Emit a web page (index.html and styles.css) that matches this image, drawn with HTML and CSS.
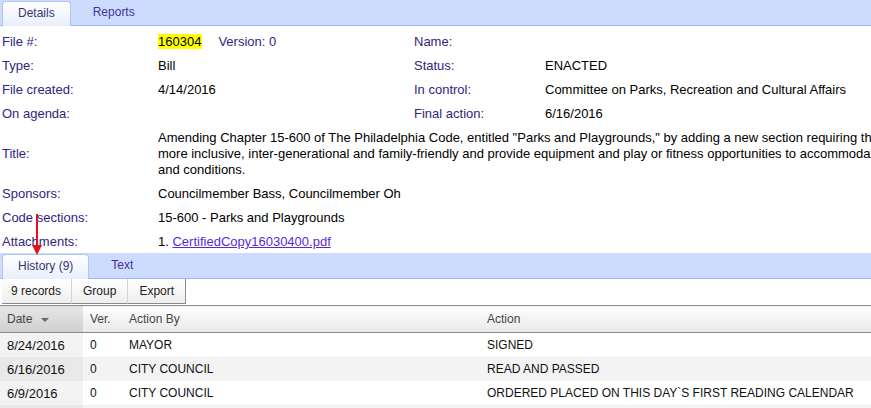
FILE: index.html
```html
<!DOCTYPE html>
<html><head>
<meta charset="utf-8">
<title>File 160304 - Details</title>
<link rel="stylesheet" href="styles.css">
</head>
<body>
<div class="page">

<div class="tabbar">
  <span class="tab active">Details</span>
  <span class="tab">Reports</span>
</div>

<table class="details" cellspacing="0" cellpadding="0">
<colgroup><col class="w-lbl"><col class="w-val"><col class="w-lbl2"><col></colgroup>
<tr>
  <td class="lbl">File #:</td>
  <td><span class="hl">160304</span><span class="ver">Version: 0</span></td>
  <td class="lbl">Name:</td>
  <td></td>
</tr>
<tr>
  <td class="lbl">Type:</td>
  <td>Bill</td>
  <td class="lbl">Status:</td>
  <td>ENACTED</td>
</tr>
<tr>
  <td class="lbl">File created:</td>
  <td>4/14/2016</td>
  <td class="lbl">In control:</td>
  <td>Committee on Parks, Recreation and Cultural Affairs</td>
</tr>
<tr>
  <td class="lbl">On agenda:</td>
  <td></td>
  <td class="lbl">Final action:</td>
  <td>6/16/2016</td>
</tr>
<tr>
  <td class="lbl">Title:</td>
  <td colspan="3">Amending Chapter 15-600 of The Philadelphia Code, entitled "Parks and Playgrounds," by adding a new section requiring that playgrounds be<br>
  more inclusive, inter-generational and family-friendly and provide equipment and play or fitness opportunities to accommodate people of all ages, abilities<br>
  and conditions.</td>
</tr>
<tr>
  <td class="lbl">Sponsors:</td>
  <td colspan="3">Councilmember Bass, Councilmember Oh</td>
</tr>
<tr>
  <td class="lbl">Code sections:</td>
  <td colspan="3">15-600 - Parks and Playgrounds</td>
</tr>
<tr class="last">
  <td class="lbl">Attachments:</td>
  <td colspan="3">1. <a href="#">CertifiedCopy16030400.pdf</a></td>
</tr>
</table>

<div class="tabbar">
  <span class="tab active">History (9)</span>
  <span class="tab">Text</span>
</div>

<div class="toolbar">
  <span class="btn">9 records</span><span class="btn">Group</span><span class="btn last">Export</span>
</div>

<table class="grid" cellspacing="0" cellpadding="0">
<colgroup><col class="w-date"><col class="w-ver"><col class="w-by"><col></colgroup>
<tr class="head">
  <th class="c-date sorted">Date <span class="sort"></span></th>
  <th>Ver.</th>
  <th>Action By</th>
  <th>Action</th>
</tr>
<tr>
  <td class="c-date">8/24/2016</td><td>0</td><td>MAYOR</td><td>SIGNED</td>
</tr>
<tr class="alt">
  <td class="c-date">6/16/2016</td><td>0</td><td>CITY COUNCIL</td><td>READ AND PASSED</td>
</tr>
<tr>
  <td class="c-date">6/9/2016</td><td>0</td><td>CITY COUNCIL</td><td>ORDERED PLACED ON THIS DAY`S FIRST READING CALENDAR</td>
</tr>
<tr class="alt">
  <td class="c-date"></td><td></td><td></td><td></td>
</tr>
</table>

<svg class="arrow" width="14" height="42" viewBox="0 0 14 42">
  <line x1="7" y1="0" x2="7" y2="33" stroke="#e3121b" stroke-width="2"/>
  <polygon points="2,31 12,31 7,41" fill="#e3121b"/>
</svg>

</div>
</body></html>
```

FILE: styles.css
```css
BODY {margin: 0; background-color: white; overflow: hidden; font-size: 13px; font-family: "Liberation Sans", Arial, sans-serif; color: #000;}

.page {position: relative; width: 1100px;}

.tabbar {height: 26px; box-sizing: border-box; background: #cddcfe; border-bottom: 1px solid #9fb9f4; display: flex; align-items: flex-end; padding-left: 2px;}
.tab {height: 24px; line-height: 23px; padding: 0 22px; color: #45309c; box-sizing: border-box; font-size: 12px;}
.tab.active {background: linear-gradient(#ffffff, #e8effc); border: 1px solid #b1c6ee; border-bottom: none; border-radius: 4px 4px 0 0; color: #3a3470; padding: 0 15px; margin-bottom: -1px; height: 25px;}

.details {margin-top: 4px; border-collapse: collapse; table-layout: fixed; width: 1100px; font-size: 13px;}
.details .w-lbl {width: 158px;}
.details .w-val {width: 256px;}
.details .w-lbl2 {width: 131px;}
.details td {padding: 4px 0; line-height: 16px; vertical-align: middle; white-space: nowrap; overflow: hidden;}
.details tr.last td {padding-bottom: 3px;}
.details td.lbl {color: #33247e;}
.details tr td:first-child {padding-left: 2px;}
.hl {background: #ffff00; padding: 0 1px; margin-left: -1px;}
.ver {margin-left: 16px; color: #33247e;}
a {color: #5a2ad8;}

.toolbar {display: flex; height: 26px; box-sizing: border-box; border-bottom: 1px solid #fff;}
.btn {height: 25px; line-height: 24px; padding: 0 11px; box-sizing: border-box; background: linear-gradient(#ffffff, #eeeeee); border-left: 1px solid #d4d4d4; border-bottom: 1px solid #8c8c8c; color: #222; font-size: 12px;}
.btn:first-child {margin-left: 2px; border-left: none; padding: 0 10px 0 9px;}
.btn.last {border-right: 1px solid #8c8c8c;}

.grid {border-collapse: collapse; table-layout: fixed; width: 1100px; border-top: 1px solid #8a8a8a; font-size: 12px;}
.grid .w-date {width: 83px;}
.grid .w-ver {width: 39px;}
.grid .w-by {width: 358px;}
.grid th {height: 26px; text-align: left; font-weight: normal; color: #444; background: linear-gradient(#fdfdfd, #e9e9e9); border-bottom: 1px solid #8a8a8a; padding: 0 0 0 7px; white-space: nowrap;}
.grid th.sorted {background: linear-gradient(#e6e6e6, #cfcfcf);}
.grid td {height: 24px; padding: 0 0 0 7px; white-space: nowrap; overflow: hidden; color: #111;}
.grid td.c-date {background: #f3f3f3; font-size: 13px;}
.grid tr.alt td {background: #f3f3f3;}
.grid tr.alt td.c-date {background: #e9e9e9;}
.sort {display: inline-block; width: 0; height: 0; border-left: 4px solid transparent; border-right: 4px solid transparent; border-top: 4px solid #666; margin-left: 5px; vertical-align: middle;}

.arrow {position: absolute; left: 30px; top: 214px;}
```
